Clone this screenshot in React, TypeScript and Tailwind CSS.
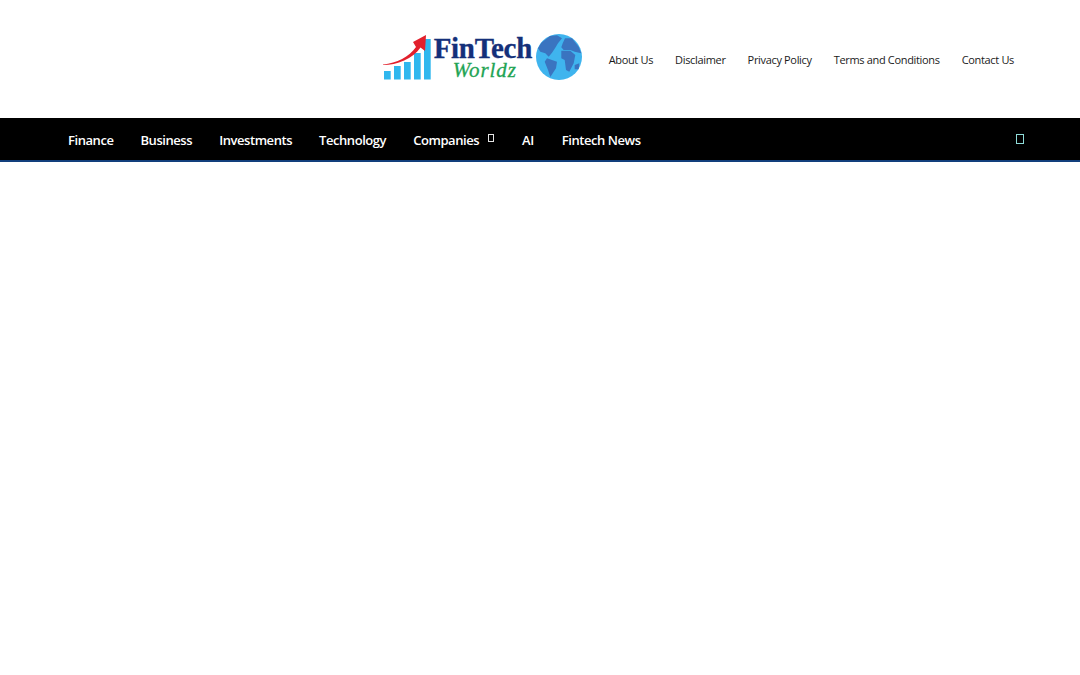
export default function App() {
  const top = ["About Us", "Disclaimer", "Privacy Policy", "Terms and Conditions", "Contact Us"];
  return (
    <div className="min-h-[675px] bg-white font-['Open_Sans','Noto_Sans',sans-serif]">
      <header className="h-[118px] flex items-start justify-end pr-[66px]">
        <a className="flex items-start mt-[33px] h-[49px] w-[199px]">
          <svg width="49" height="48" viewBox="0 0 49 48" className="shrink-0">
            <rect x="1" y="38" width="6.7" height="8.5" fill="#2fb7ee" />
            <rect x="11" y="33" width="6.7" height="13.5" fill="#2fb7ee" />
            <rect x="21" y="29" width="6.7" height="17.5" fill="#2fb7ee" />
            <rect x="31" y="20" width="6.7" height="26.5" fill="#2fb7ee" />
            <rect x="41" y="6" width="6.7" height="40.5" fill="#2fb7ee" />
            <path d="M0 31.5 C 14 30 26 24 33 14 L 30 9 L 43 2 L 42 18 L 37.5 14.5 C 30 26 14 32 0 32 Z" fill="#e2202c" />
          </svg>
          <div className="w-[102px] shrink-0 pl-[2px] flex flex-col items-start font-['Liberation_Serif',serif]">
            <span className="mt-[1px] text-[29px] leading-[29px] font-bold text-[#14307a] tracking-[-0.3px] whitespace-nowrap [-webkit-text-stroke:0.3px_#14307a]">FinTech</span>
            <span className="-mt-[2px] ml-[19px] text-[21px] leading-[18px] italic text-[#1fa454] tracking-[0.9px] [-webkit-text-stroke:0.3px_#1fa454]">Worldz</span>
          </div>
          <svg width="46" height="46" viewBox="0 0 46 46" className="shrink-0 mt-[1px] ml-[2px]">
            <circle cx="23" cy="23" r="23" fill="#3fb4ee" />
            <path d="M5.3 8.7 L14 2 L21 1.3 L26 4.3 L22 9.3 L19 14.3 L16 18.7 L12.7 22.7 L9.3 19.3 L4.3 17.7 L2 14.3 Z" fill="#3a74c0" />
            <path d="M11 24.3 L21 27.7 L20 34.3 L14.3 43 L12 36 L8.7 27.7 Z" fill="#3a74c0" />
            <path d="M29 4.3 L36 4.3 L42.7 12.7 L45.3 19.3 L38.7 17.7 L34.3 16 L27.7 16 L25.3 13.3 L26.7 9.3 Z" fill="#3a74c0" />
            <path d="M25.3 16.7 L34.3 16.7 L39.3 21 L37.7 29.3 L33.3 37.7 L30 36 L28.7 26 L25.3 24.3 Z" fill="#3a74c0" />
            <path d="M38.7 31 L43.3 29.3 L42.7 35.3 L38.7 35.3 Z" fill="#3a74c0" />
          </svg>
        </a>
        <nav className="flex gap-[22px] ml-[27px] mt-[52px] text-[11px] leading-[16px] tracking-[-0.33px] text-[#1a1a1a]">
          {top.map((t) => (
            <a key={t} className="whitespace-nowrap">{t}</a>
          ))}
        </nav>
      </header>
      <nav className="h-[44px] bg-black border-b-[2px] border-[#123f7c] flex items-center pl-[68px] pr-[56px] text-white">
        <ul className="flex items-center gap-[27px] mt-[1px] text-[13px] leading-[20px] font-semibold tracking-[-0.44px]">
          <li>Finance</li>
          <li>Business</li>
          <li>Investments</li>
          <li>Technology</li>
          <li className="flex items-center">
            Companies
            <span className="ml-[9px] mr-[1px] -mt-[3px] w-[6px] h-[8px] border border-[#e5e5e5]" />
          </li>
          <li className="mr-[1px]">AI</li>
          <li>Fintech News</li>
        </ul>
        <span className="ml-auto w-[8px] h-[10px] border border-[#8fdcd8]" />
      </nav>
    </div>
  );
}
